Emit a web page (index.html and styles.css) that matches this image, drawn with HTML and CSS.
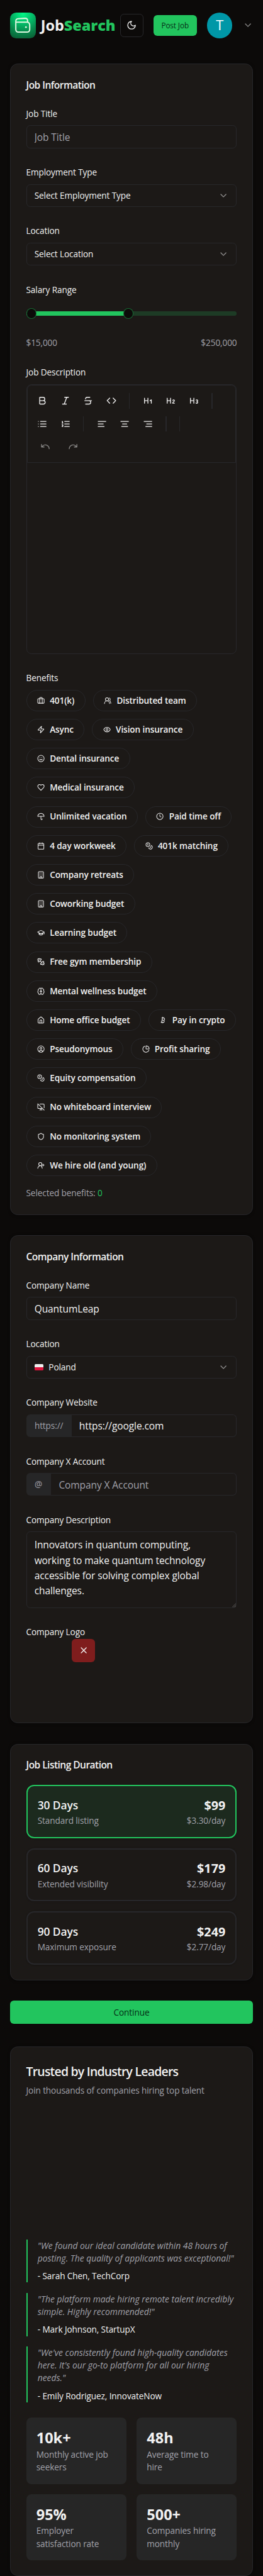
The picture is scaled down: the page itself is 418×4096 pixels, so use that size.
FILE: index.html
```
<!DOCTYPE html>
<html lang="en">
<head>
<meta charset="utf-8">
<title>JobSearch</title>
<link rel="stylesheet" href="styles.css">
</head>
<body>
<svg class="sprite" aria-hidden="true">
  <symbol id="chevron" viewBox="0 0 24 24"><path d="m6 9 6 6 6-6"/></symbol>
  <symbol id="briefcase" viewBox="0 0 24 24"><rect x="2" y="6" width="20" height="14" rx="2"/><path d="M16 20V4a2 2 0 0 0-2-2h-4a2 2 0 0 0-2 2v16"/></symbol>
  <symbol id="users" viewBox="0 0 24 24"><path d="M18 21a8 8 0 0 0-16 0"/><circle cx="10" cy="8" r="5"/><path d="M22 20c0-3.37-2-6.5-4-8a5 5 0 0 0-.45-8.3"/></symbol>
  <symbol id="zap" viewBox="0 0 24 24"><path d="M4 14a1 1 0 0 1-.78-1.63l9.9-10.2a.5.5 0 0 1 .86.46l-1.92 6.02A1 1 0 0 0 13 10h7a1 1 0 0 1 .78 1.63l-9.9 10.2a.5.5 0 0 1-.86-.46l1.92-6.02A1 1 0 0 0 11 14z"/></symbol>
  <symbol id="eye" viewBox="0 0 24 24"><path d="M2.06 12.35a1 1 0 0 1 0-.7 10.75 10.75 0 0 1 19.88 0 1 1 0 0 1 0 .7 10.75 10.75 0 0 1-19.88 0"/><circle cx="12" cy="12" r="3"/></symbol>
  <symbol id="smile" viewBox="0 0 24 24"><circle cx="12" cy="12" r="10"/><path d="M8 14s1.5 2 4 2 4-2 4-2M9 9h.01M15 9h.01"/></symbol>
  <symbol id="heart" viewBox="0 0 24 24"><path d="M19 14c1.49-1.46 3-3.21 3-5.5A5.5 5.5 0 0 0 16.5 3c-1.76 0-3 .5-4.5 2-1.5-1.5-2.74-2-4.5-2A5.5 5.5 0 0 0 2 8.5c0 2.3 1.5 4.05 3 5.5l7 7Z"/></symbol>
  <symbol id="umbrella" viewBox="0 0 24 24"><path d="M22 12a10.06 10.06 0 0 0-20 0ZM12 12v8a2 2 0 0 0 4 0M12 2v1"/></symbol>
  <symbol id="clock" viewBox="0 0 24 24"><circle cx="12" cy="12" r="10"/><path d="M12 6v6l4 2"/></symbol>
  <symbol id="calendar" viewBox="0 0 24 24"><path d="M8 2v4M16 2v4M3 10h18"/><rect x="3" y="4" width="18" height="18" rx="2"/></symbol>
  <symbol id="coins" viewBox="0 0 24 24"><circle cx="8" cy="8" r="6"/><path d="M18.09 10.37A6 6 0 1 1 10.34 18M7 6h1v4M16.71 13.88l.7.71-2.82 2.82"/></symbol>
  <symbol id="building" viewBox="0 0 24 24"><rect x="4" y="2" width="16" height="20" rx="2"/><path d="M9 22v-4h6v4M8 6h.01M16 6h.01M12 6h.01M12 10h.01M12 14h.01M16 10h.01M16 14h.01M8 10h.01M8 14h.01"/></symbol>
  <symbol id="cap" viewBox="0 0 24 24"><path d="M21.42 10.92a1 1 0 0 0-.02-1.84L12.83 5.18a2 2 0 0 0-1.66 0L2.6 9.08a1 1 0 0 0 0 1.83l8.57 3.91a2 2 0 0 0 1.66 0zM22 10v6M6 12.5V16a6 3 0 0 0 12 0v-3.5"/></symbol>
  <symbol id="dumbbell" viewBox="0 0 24 24"><path d="M14.4 14.4 9.6 9.6M18.66 21.49a2 2 0 1 1-2.83-2.83l-1.77 1.77a2 2 0 1 1-2.83-2.83l6.37-6.37a2 2 0 1 1 2.83 2.83l-1.77 1.77a2 2 0 1 1 2.83 2.83zM21.5 21.5l-1.4-1.4M3.9 3.9 2.5 2.5M6.4 12.77a2 2 0 1 1-2.83-2.83l1.77-1.77a2 2 0 1 1-2.83-2.83l2.83-2.83a2 2 0 1 1 2.83 2.83l1.77-1.77a2 2 0 1 1 2.83 2.83z"/></symbol>
  <symbol id="brain" viewBox="0 0 24 24"><path d="M12 5a3 3 0 1 0-6 .13 4 4 0 0 0-2.53 5.77 4 4 0 0 0 .56 6.59A4 4 0 1 0 12 18ZM12 5a3 3 0 1 1 6 .13 4 4 0 0 1 2.53 5.77 4 4 0 0 1-.56 6.59A4 4 0 1 1 12 18ZM15 13a4.5 4.5 0 0 1-3-4 4.5 4.5 0 0 1-3 4"/></symbol>
  <symbol id="home" viewBox="0 0 24 24"><path d="M15 21v-8a1 1 0 0 0-1-1h-4a1 1 0 0 0-1 1v8"/><path d="M3 10a2 2 0 0 1 .71-1.53l7-6a2 2 0 0 1 2.58 0l7 6A2 2 0 0 1 21 10v9a2 2 0 0 1-2 2H5a2 2 0 0 1-2-2z"/></symbol>
  <symbol id="bitcoin" viewBox="0 0 24 24"><path d="M11.77 19.09c4.92.86 6.14-6.03 1.21-6.9m-1.21 6.9L5.86 18.05m5.91 1.04-.35 1.97m1.56-8.87c4.93.87 6.14-6.03 1.22-6.9m-1.22 6.9-3.94-.7m5.16-6.2L8.29 4.26m5.91 1.03.35-1.97M7.48 20.36l3.13-17.72"/></symbol>
  <symbol id="user-circle" viewBox="0 0 24 24"><circle cx="12" cy="12" r="10"/><circle cx="12" cy="10" r="3"/><path d="M7 20.66V19a2 2 0 0 1 2-2h6a2 2 0 0 1 2 2v1.66"/></symbol>
  <symbol id="pie" viewBox="0 0 24 24"><path d="M21 12c.55 0 1-.45.95-1a10 10 0 0 0-8.95-8.95c-.55-.06-1 .4-1 .95v8a1 1 0 0 0 1 1zM21.21 15.89A10 10 0 1 1 8 2.83"/></symbol>
  <symbol id="monitor-off" viewBox="0 0 24 24"><path d="M17 17H4a2 2 0 0 1-2-2V5c0-1.5 1-2 1-2M22 15V5a2 2 0 0 0-2-2H9M8 21h8M12 17v4M2 2l20 20"/></symbol>
  <symbol id="shield" viewBox="0 0 24 24"><path d="M20 13c0 5-3.5 7.5-7.66 8.95a1 1 0 0 1-.67-.01C7.5 20.5 4 18 4 13V6a1 1 0 0 1 1-1c2 0 4.5-1.2 6.24-2.72a1.17 1.17 0 0 1 1.52 0C14.51 3.81 17 5 19 5a1 1 0 0 1 1 1z"/></symbol>
  <symbol id="user-plus" viewBox="0 0 24 24"><path d="M2 21a8 8 0 0 1 13.29-6"/><circle cx="10" cy="8" r="5"/><path d="M16 21a8 8 0 0 0-2-5M19 8v6M22 11h-6"/></symbol>
</svg>

<header class="header">
  <a class="brand">
    <span class="logo">
      <svg viewBox="0 0 30 30"><path d="M1.4 8.6V23.5a5 5 0 0 0 5 5h17.2a5 5 0 0 0 5-5V14a5 5 0 0 0-5-5H3.2M1.4 9.500V7.500Q1.400 2.600 6 2.300L19.500 1.400Q24.500 1.200 24.500 6V9"/><circle cx="21.300" cy="18.700" r="1.800"/></svg>
    </span>
    <span class="wordmark">Job<b>Search</b></span>
  </a>
  <div class="actions">
    <button class="theme"><svg class="icon" viewBox="0 0 24 24"><path d="M12 3a6 6 0 0 0 9 9 9 9 0 1 1-9-9Z"/></svg></button>
    <button class="post">Post Job</button>
    <span class="avatar">T</span>
    <svg class="icon dim"><use href="#chevron"/></svg>
  </div>
</header>

<main>
  <section class="card job">
    <h2 class="card-title">Job Information</h2>
    <div class="field"><label>Job Title</label><input class="control" placeholder="Job Title"></div>
    <div class="field"><label>Employment Type</label><div class="control select"><span>Select Employment Type</span><svg class="icon dim"><use href="#chevron"/></svg></div></div>
    <div class="field"><label>Location</label><div class="control select"><span>Select Location</span><svg class="icon dim"><use href="#chevron"/></svg></div></div>
    <div class="field salary">
      <label>Salary Range</label>
      <div class="slider"><div class="range"></div><i class="thumb"></i><i class="thumb high"></i></div>
      <div class="bounds"><span>$15,000</span><span>$250,000</span></div>
    </div>
    <div class="field description">
      <label>Job Description</label>
      <div class="editor">
        <div class="toolbar">
          <div class="row">
            <button><svg class="icon" viewBox="0 0 24 24"><path d="M6 12h9a4 4 0 0 1 0 8H7a1 1 0 0 1-1-1V5a1 1 0 0 1 1-1h7a4 4 0 0 1 0 8"/></svg></button>
            <button><svg class="icon" viewBox="0 0 24 24"><path d="M19 4h-9M14 20H5M15 4 9 20"/></svg></button>
            <button><svg class="icon" viewBox="0 0 24 24"><path d="M16 4H9a3 3 0 0 0-2.83 4M14 12a4 4 0 0 1 0 8H6M4 12h16"/></svg></button>
            <button><svg class="icon" viewBox="0 0 24 24"><path d="m16 18 6-6-6-6M8 6l-6 6 6 6"/></svg></button>
            <i class="sep"></i>
            <button><svg class="icon" viewBox="0 0 24 24"><path d="M4 12h8M4 18V6M12 18V6M17 12l3-2v8"/></svg></button>
            <button><svg class="icon" viewBox="0 0 24 24"><path d="M4 12h8M4 18V6M12 18V6M21 18h-4c0-4 4-3 4-6 0-1.500-2-2.500-4-1"/></svg></button>
            <button><svg class="icon" viewBox="0 0 24 24"><path d="M4 12h8M4 18V6M12 18V6M17.500 10.500c1.700-1 3.500 0 3.500 1.500a2 2 0 0 1-2 2M17 17.500c2 1.500 4 .3 4-1.500a2 2 0 0 0-2-2"/></svg></button>
            <i class="sep double"></i>
          </div>
          <div class="row">
            <button><svg class="icon" viewBox="0 0 24 24"><path d="M8 6h13M8 12h13M8 18h13M3 6h.01M3 12h.01M3 18h.01"/></svg></button>
            <button><svg class="icon" viewBox="0 0 24 24"><path d="M10 6h11M10 12h11M10 18h11M4 6h1v4M4 10h2M6 18H4c0-1 2-2 2-3s-1-1.500-2-1"/></svg></button>
            <i class="sep"></i>
            <button><svg class="icon" viewBox="0 0 24 24"><path d="M21 6H3M15 12H3M17 18H3"/></svg></button>
            <button><svg class="icon" viewBox="0 0 24 24"><path d="M21 6H3M17 12H7M19 18H5"/></svg></button>
            <button><svg class="icon" viewBox="0 0 24 24"><path d="M21 6H3M21 12H9M21 18H7"/></svg></button>
            <i class="sep double"></i>
            <i class="sep"></i>
          </div>
          <div class="row history">
            <button><svg class="icon" viewBox="0 0 24 24"><path d="M3 7v6h6M21 17a9 9 0 0 0-9-9 9 9 0 0 0-6 2.300L3 13"/></svg></button>
            <button><svg class="icon" viewBox="0 0 24 24"><path d="M21 7v6h-6M3 17a9 9 0 0 1 9-9 9 9 0 0 1 6 2.300l3 2.700"/></svg></button>
          </div>
        </div>
      </div>
    </div>
    <div class="field benefits">
      <label>Benefits</label>
      <div class="chips">
        <span class="chip"><svg><use href="#briefcase"/></svg>401(k)</span>
        <span class="chip"><svg><use href="#users"/></svg>Distributed team</span>
        <span class="chip"><svg><use href="#zap"/></svg>Async</span>
        <span class="chip"><svg><use href="#eye"/></svg>Vision insurance</span>
        <span class="chip"><svg><use href="#smile"/></svg>Dental insurance</span>
        <span class="chip"><svg><use href="#heart"/></svg>Medical insurance</span>
        <span class="chip"><svg><use href="#umbrella"/></svg>Unlimited vacation</span>
        <span class="chip"><svg><use href="#clock"/></svg>Paid time off</span>
        <span class="chip"><svg><use href="#calendar"/></svg>4 day workweek</span>
        <span class="chip"><svg><use href="#coins"/></svg>401k matching</span>
        <span class="chip"><svg><use href="#building"/></svg>Company retreats</span>
        <span class="chip"><svg><use href="#building"/></svg>Coworking budget</span>
        <span class="chip"><svg><use href="#cap"/></svg>Learning budget</span>
        <span class="chip"><svg><use href="#dumbbell"/></svg>Free gym membership</span>
        <span class="chip"><svg><use href="#brain"/></svg>Mental wellness budget</span>
        <span class="chip"><svg><use href="#home"/></svg>Home office budget</span>
        <span class="chip"><svg><use href="#bitcoin"/></svg>Pay in crypto</span>
        <span class="chip"><svg><use href="#user-circle"/></svg>Pseudonymous</span>
        <span class="chip"><svg><use href="#pie"/></svg>Profit sharing</span>
        <span class="chip"><svg><use href="#coins"/></svg>Equity compensation</span>
        <span class="chip"><svg><use href="#monitor-off"/></svg>No whiteboard interview</span>
        <span class="chip"><svg><use href="#shield"/></svg>No monitoring system</span>
        <span class="chip"><svg><use href="#user-plus"/></svg>We hire old (and young)</span>
      </div>
      <p class="selected">Selected benefits: <b>0</b></p>
    </div>
  </section>

  <section class="card company">
    <h2 class="card-title">Company Information</h2>
    <div class="field"><label>Company Name</label><input class="control" value="QuantumLeap"></div>
    <div class="field"><label>Location</label><div class="control select"><i class="flag"></i><span>Poland</span><svg class="icon dim"><use href="#chevron"/></svg></div></div>
    <div class="field"><label>Company Website</label><div class="group"><span class="addon site">https://</span><input class="control" value="https://google.com"></div></div>
    <div class="field"><label>Company X Account</label><div class="group"><span class="addon at">@</span><input class="control" placeholder="Company X Account"></div></div>
    <div class="field"><label>Company Description</label>
      <div class="textarea">Innovators in quantum computing,<br>working to make quantum technology<br>accessible for solving complex global<br>challenges.<svg class="grip" viewBox="0 0 8 8"><path d="M0 8 8 0M2.700 8 8 2.700M5.300 8 8 5.300"/></svg></div>
    </div>
    <div class="field"><label>Company Logo</label><button class="remove"><svg class="icon" viewBox="0 0 24 24"><path d="M18 6 6 18M6 6l12 12"/></svg></button></div>
  </section>

  <section class="card duration">
    <h2 class="card-title">Job Listing Duration</h2>
    <div class="option active"><div><h3>30 Days</h3><p>Standard listing</p></div><div class="cost"><strong>$99</strong><p>$3.30/day</p></div></div>
    <div class="option"><div><h3>60 Days</h3><p>Extended visibility</p></div><div class="cost"><strong>$179</strong><p>$2.98/day</p></div></div>
    <div class="option"><div><h3>90 Days</h3><p>Maximum exposure</p></div><div class="cost"><strong>$249</strong><p>$2.77/day</p></div></div>
  </section>

  <button class="continue">Continue</button>

  <section class="card trust">
    <h2 class="trust-title">Trusted by Industry Leaders</h2>
    <p class="trust-sub">Join thousands of companies hiring top talent</p>
    <div class="partners"></div>
    <div class="quotes">
      <blockquote><p>"We found our ideal candidate within 48 hours of<br>posting. The quality of applicants was exceptional!"</p><footer>- Sarah Chen, TechCorp</footer></blockquote>
      <blockquote><p>"The platform made hiring remote talent incredibly<br>simple. Highly recommended!"</p><footer>- Mark Johnson, StartupX</footer></blockquote>
      <blockquote><p>"We've consistently found high-quality candidates<br>here. It's our go-to platform for all our hiring<br>needs."</p><footer>- Emily Rodriguez, InnovateNow</footer></blockquote>
    </div>
    <div class="stats">
      <div class="stat"><strong>10k+</strong><p>Monthly active job<br>seekers</p></div>
      <div class="stat"><strong>48h</strong><p>Average time to<br>hire</p></div>
      <div class="stat"><strong>95%</strong><p>Employer<br>satisfaction rate</p></div>
      <div class="stat"><strong>500+</strong><p>Companies hiring<br>monthly</p></div>
    </div>
  </section>
</main>
</body>
</html>
```
FILE: styles.css
```
:root {
  --bg: #0c0a09;
  --card: #1c1917;
  --line: #27272a;
  --text: #f2f2f2;
  --muted: #a1a1aa;
  --green: #22c55e;
}

* { box-sizing: border-box; margin: 0; padding: 0; }

html { font-size: 8.107px; background: var(--bg); }

body {
  font-family: "Open Sans", "Noto Sans", sans-serif;
  font-size: 1.68rem;
  line-height: 2.5rem;
  letter-spacing: -0.008em;
  color: var(--text);
  background: var(--bg);
  overflow-x: hidden;
}

button, input { font: inherit; letter-spacing: inherit; color: inherit; background: none; border: 0; outline: 0; }
i { font-style: normal; }

.sprite { position: absolute; width: 0; height: 0; }

svg { fill: none; stroke: currentColor; stroke-width: 2; stroke-linecap: round; stroke-linejoin: round; display: block; flex: none; }
.icon { width: 2rem; height: 2rem; }
.dim { opacity: .55; }

/* header */
.header { display: flex; justify-content: space-between; align-items: center; height: 12.5rem; padding: 2.5rem 2rem 5rem; }
.brand { display: flex; align-items: center; gap: 1rem; }
.logo {
  display: grid; place-items: center; width: 5rem; height: 5rem; border-radius: 1.2rem;
  background: radial-gradient(circle at 50% 5%, #00fa87 0%, #04bb68 35%, #07894c 65%, #0b5732 100%);
}
.logo svg { width: 3rem; height: 3rem; color: #dcf7e0; stroke-width: 2.5; }
.logo circle { fill: currentColor; stroke: none; }
.wordmark { font-size: 2.9rem; font-weight: 700; line-height: 5rem; letter-spacing: -0.004em; }
.wordmark b { color: var(--green); }
.actions { display: flex; align-items: center; gap: 2rem; }
.theme { display: grid; place-items: center; width: 4.5rem; height: 4.5rem; border: 1px solid var(--line); border-radius: .75rem; }
.post { width: 8.5rem; height: 4rem; border-radius: .75rem; background: var(--green); color: #052e16; font-size: 1.45rem; white-space: nowrap; }
.avatar { display: grid; place-items: center; width: 5rem; height: 5rem; border-radius: 50%; background: #0097a7; color: #fff; font-size: 2.7rem; line-height: 5rem; }

/* cards */
main { padding: 0 2rem; }
.card {
  padding: 3rem 3rem 0; border: 1px solid var(--line); border-radius: 1.5rem; background: var(--card);
  box-shadow: 0 .1rem .5rem rgba(0, 0, 0, .4);
}
.job { height: 225.8rem; margin-bottom: 4rem; }
.company { height: 95.7rem; margin-bottom: 4rem; }
.duration { height: 46.4rem; margin-bottom: 4rem; }
.card-title { font-size: 1.92rem; font-weight: 600; line-height: 2.2rem; letter-spacing: -0.035em; margin-bottom: 3.28rem; }

/* form fields */
.field { margin-bottom: 3.5rem; }
.field label { display: block; height: 2.5rem; margin-bottom: 1rem; white-space: nowrap; }
.control {
  display: flex; align-items: center; width: 100%; height: 4.5rem; padding: .1rem 1.5rem 0;
  border: 1px solid var(--line); border-radius: .75rem;
}
input.control { font-size: 1.92rem; }
.control::placeholder { color: var(--muted); opacity: 1; }
.select svg { margin-left: auto; margin-right: 0; }
.flag { width: 1.8rem; height: 1.3rem; margin-right: 1rem; border-radius: .2rem; background: linear-gradient(#eee 46%, #dc143c 46%); }

.salary { margin-bottom: 3.3rem; }
.slider { position: relative; height: .8rem; margin: 3rem 0 4.1rem; border-radius: .4rem; background: rgba(34, 197, 94, .2); }
.range { width: 48.5%; height: 100%; border-radius: .4rem 0 0 .4rem; background: var(--green); }
.thumb { position: absolute; top: -.6rem; left: 0; width: 2rem; height: 2rem; border: 1px solid rgba(34, 197, 94, .5); border-radius: 50%; background: var(--bg); }
.thumb.high { left: 46.2%; }
.bounds { display: flex; justify-content: space-between; color: var(--muted); }

.description { margin-bottom: 3.4rem; }
.field.description label, .field.benefits label { margin-bottom: 1.1rem; }
.editor { height: 52.9rem; border: 1px solid var(--line); border-radius: 1rem; }
.toolbar {
  display: flex; flex-direction: column; gap: 1.5rem; height: 15.3rem; padding: 1.5rem .72rem 0;
  border: 1px solid var(--line); border-radius: .9rem .9rem 0 0;
}
.row { display: flex; height: 3rem; }
.row button { display: grid; place-items: center; width: 4.5rem; height: 3rem; }
.row .sep { width: 1px; height: 3rem; margin: 0 1.25rem; background: var(--line); }
.row .sep.double { width: 2px; }
.history button { width: 5.5rem; opacity: .5; }

.chips { display: flex; flex-wrap: wrap; gap: 1.5rem; margin-right: -.5rem; }
.chip {
  display: inline-flex; align-items: center; gap: 1rem; height: 4.2rem; padding: 0 2.02rem;
  border: 1px solid var(--line); border-radius: 2.1rem; font-weight: 600; white-space: nowrap;
}
.chip svg { width: 1.5rem; height: 1.5rem; }
.selected { margin-top: 2.07rem; color: var(--muted); }
.selected b { color: var(--green); font-weight: 400; }

.group { display: flex; }
.group .control { flex: 1; min-width: 0; border-left: 0; border-radius: 0 .75rem .75rem 0; }
.addon { display: flex; align-items: center; height: 4.5rem; padding-left: 1.65rem; border-radius: .75rem 0 0 .75rem; background: #262627; color: var(--muted); }
.site { width: 8.9rem; }
.at { width: 4.9rem; }
.textarea {
  position: relative; height: 15rem; padding: 1rem 1.5rem; border: 1px solid var(--line); border-radius: .75rem;
  font-size: 1.92rem; line-height: 3rem; white-space: nowrap;
}
.grip { position: absolute; right: 0; bottom: 0; width: .8rem; height: .8rem; stroke-width: .8; opacity: .4; }
.remove { display: grid; place-items: center; width: 4.5rem; height: 4.5rem; margin: -.9rem 0 0 9rem; border-radius: .75rem; background: #7f1d1d; }

/* pricing options */
.duration .card-title { margin-bottom: 2.78rem; }
.option {
  display: flex; justify-content: space-between; height: 10.4rem; margin-bottom: 2rem; padding: 2.27rem 2rem 0;
  border: 2px solid var(--line); border-radius: 1.5rem; box-shadow: 0 .1rem .3rem rgba(0, 0, 0, .2);
}
.option.active { border-color: var(--green); background: rgba(34, 197, 94, .1); }
.option h3 { margin-bottom: .5rem; font-size: 2.15rem; font-weight: 600; line-height: 2.8rem; }
.option p { color: var(--muted); }
.cost { text-align: right; }
.cost strong { display: block; margin-bottom: .3rem; font-size: 2.44rem; font-weight: 700; line-height: 3rem; letter-spacing: 0; }

.continue { display: block; width: 100%; height: 4.5rem; margin-bottom: 4.5rem; padding-top: .2rem; border-radius: .75rem; background: var(--green); color: #052e16; }

/* social proof */
.trust { height: 103.8rem; }
.trust-title { margin: .33rem 0 .96rem; font-size: 2.4rem; font-weight: 600; line-height: 3rem; letter-spacing: -0.04em; white-space: nowrap; }
.trust-sub { color: var(--muted); white-space: nowrap; }
.partners { height: 27.9rem; }
.quotes { display: flex; flex-direction: column; gap: 2rem; margin-bottom: 3rem; }
blockquote { padding-left: 2rem; border-left: 2px solid var(--green); white-space: nowrap; }
blockquote p { margin-bottom: 1rem; color: var(--muted); font-size: 1.71rem; font-style: italic; letter-spacing: 0; }
.stats { display: grid; grid-template-columns: 1fr 1fr; gap: 2rem; }
.stat { height: 13rem; padding: 2rem 0 0 2rem; border-radius: 1rem; background: #262626; white-space: nowrap; }
.stat strong { display: block; font-size: 2.9rem; line-height: 4rem; letter-spacing: 0; }
.stat p { color: var(--muted); }
```
